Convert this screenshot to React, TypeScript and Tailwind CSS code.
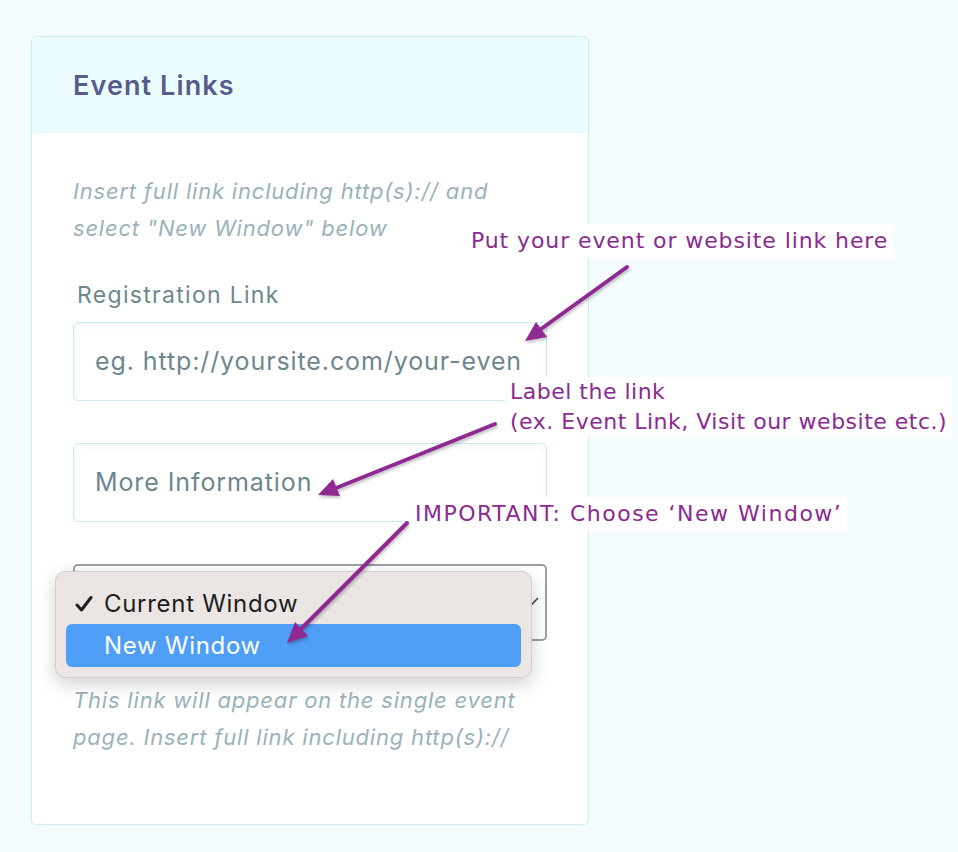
import React from "react";

const ui = { fontFamily: "Inter, 'Noto Sans', sans-serif" };
const note = { fontFamily: "'DejaVu Sans', 'Noto Sans', sans-serif" };

function Arrows() {
  return (
    <svg
      className="pointer-events-none absolute left-0 top-0"
      width="958"
      height="852"
      viewBox="0 0 958 852"
    >
      <defs>
        <filter id="sh" x="-10%" y="-10%" width="120%" height="120%">
          <feDropShadow dx="1" dy="2" stdDeviation="1.5" floodColor="#000" floodOpacity="0.25" />
        </filter>
      </defs>
      <g fill="#8e2a91" stroke="#8e2a91" filter="url(#sh)">
        <line x1="627" y1="267" x2="541" y2="329" strokeWidth="4" strokeLinecap="round" />
        <polygon points="525,341 547,337 536,322" stroke="none" />
        <line x1="495" y1="424" x2="336" y2="488" strokeWidth="4" strokeLinecap="round" />
        <polygon points="318,495 340,496 333,479" stroke="none" />
        <line x1="407" y1="523" x2="301" y2="629" strokeWidth="4" strokeLinecap="round" />
        <polygon points="287,643 308,636 295,622" stroke="none" />
      </g>
    </svg>
  );
}

function Field({ placeholder }: { placeholder: string }) {
  return (
    <div className="flex h-[79px] items-center rounded-[5px] border border-[#c9ecf2] bg-white pl-[21px] pr-[25px] shadow-[inset_0_3px_6px_rgba(0,60,80,0.04)]">
      <div className="min-w-0 flex-1 overflow-hidden">
        <span className="whitespace-nowrap text-[25px] tracking-[0.9px] text-[#6e868e]">{placeholder}</span>
      </div>
    </div>
  );
}

export default function App() {
  return (
    <div className="relative h-[852px] w-[958px] overflow-hidden bg-[#f5fcff]" style={ui}>
      <div className="pl-[31px] pt-[36px]">
        <div className="h-[789px] w-[558px] rounded-[5px] border border-[#cdeef5] bg-white">
          <div className="flex h-[96px] items-center rounded-t-[5px] bg-[#ebfcff] px-[41px] pt-[2px]">
            <h2 className="text-[27px] font-semibold tracking-[1.1px] text-[#575d8b]">Event Links</h2>
          </div>

          <div className="px-[41px] pt-[40px]">
            <p className="whitespace-nowrap text-[22px] italic leading-[37px] tracking-[0.8px] text-[#9ab2ba]">
              Insert full link including http(s):// and
              <br />
              select "New Window" below
            </p>

            <label className="mt-[33px] block pl-[4px] text-[23px] leading-[30px] tracking-[1.3px] text-[#6e868e]">
              Registration Link
            </label>
            <div className="mt-[12px]">
              <Field placeholder="eg. http://yoursite.com/your-event" />
            </div>
            <div className="mt-[42px]">
              <Field placeholder="More Information" />
            </div>

            <div className="relative mt-[42px] h-[77px] rounded-[5px] border-2 border-[#9e9e9e] bg-white">
              <svg
                className="absolute right-[6px] top-[30px]"
                width="14"
                height="10"
                viewBox="0 0 14 10"
                fill="none"
                stroke="#444"
                strokeWidth="1.6"
              >
                <path d="M1 2l6 6 6-6" />
              </svg>
              <div className="absolute left-[-20px] top-[5px] w-[477px] rounded-[10px] border border-[#d3cfcc] bg-[#ebe6e3] px-[10px] pb-[10px] pt-[13px] shadow-[0_6px_18px_rgba(0,0,0,0.18)]">
                <div className="flex h-[38px] items-center text-[24px] tracking-[0.7px] text-[#1d1d1d]">
                  <span className="flex w-[38px] pl-[9px]">
                    <svg width="18" height="18" viewBox="0 0 18 18" fill="none" stroke="#1d1d1d" strokeWidth="3" strokeLinecap="round" strokeLinejoin="round">
                      <path d="M2 10l4.5 5L16 2.5" />
                    </svg>
                  </span>
                  <span>Current Window</span>
                </div>
                <div className="mt-[1px] flex h-[43px] items-center rounded-[6px] bg-[#4f9ef8] pl-[38px] text-[24px] tracking-[0.7px] text-white">
                  New Window
                </div>
              </div>
            </div>

            <p className="mt-[41px] whitespace-nowrap text-[22px] italic leading-[37px] tracking-[0.8px] text-[#9ab2ba]">
              This link will appear on the single event
              <br />
              page. Insert full link including http(s)://
            </p>
          </div>
        </div>
      </div>

      <Arrows />

      <div
        className="absolute left-[466px] top-[224px] whitespace-nowrap bg-white px-[5px] text-[22px] leading-[34px] tracking-[0.9px] text-[#8b2a8f]"
        style={note}
      >
        Put your event or website link here
      </div>
      <div
        className="absolute left-[505px] top-[377px] whitespace-nowrap bg-white px-[5px] text-[22px] leading-[30px] tracking-[0.5px] text-[#8b2a8f]"
        style={note}
      >
        Label the link
        <br />
        (ex. Event Link, Visit our website etc.)
      </div>
      <div
        className="absolute left-[410px] top-[497px] whitespace-nowrap bg-white px-[5px] text-[22px] leading-[34px] tracking-[1.5px] text-[#8b2a8f]"
        style={note}
      >
        IMPORTANT: Choose ‘New Window’
      </div>
    </div>
  );
}
